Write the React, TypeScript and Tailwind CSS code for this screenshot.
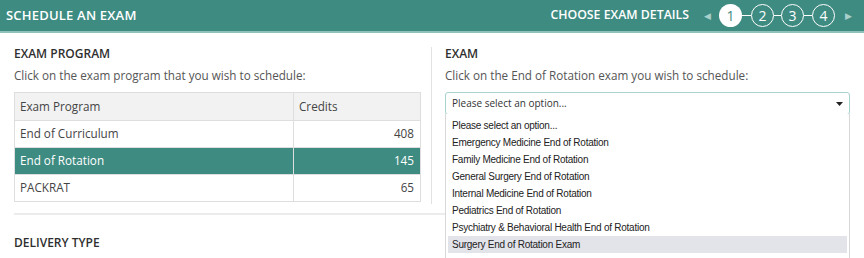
import React from "react";

const options = [
  "Please select an option...",
  "Emergency Medicine End of Rotation",
  "Family Medicine End of Rotation",
  "General Surgery End of Rotation",
  "Internal Medicine End of Rotation",
  "Pediatrics End of Rotation",
  "Psychiatry & Behavioral Health End of Rotation",
  "Surgery End of Rotation Exam",
];

const rows = [
  { name: "End of Curriculum", credits: "408", sel: false },
  { name: "End of Rotation", credits: "145", sel: true },
  { name: "PACKRAT", credits: "65", sel: false },
];

function Step({ n, active }: { n: number; active?: boolean }) {
  return (
    <div
      className={
        active
          ? "w-[23px] h-[23px] rounded-full bg-white text-[#3e8b82] flex items-center justify-center text-[14px]"
          : "w-[23px] h-[23px] rounded-full border-[1.5px] border-white text-white flex items-center justify-center text-[14px]"
      }
    >
      {n}
    </div>
  );
}

export default function App() {
  return (
    <div className="w-[864px] h-[258px] overflow-hidden bg-white relative font-['Open_Sans',sans-serif] text-[#444]">
      <div className="h-[33px] bg-[#3e8b82] border-b-[2px] border-[#8fc0ba] flex items-center pl-[6px] pr-[12px] text-white">
        <div className="text-[13px] font-semibold tracking-[0.2px]">SCHEDULE AN EXAM</div>
        <div className="ml-auto flex items-center">
          <div className="text-[12.3px] font-semibold mr-[15px]">CHOOSE EXAM DETAILS</div>
          <span className="text-[9px] text-[#a9cfca] mr-[8px]">◀</span>
          <Step n={1} active />
          <div className="w-[9px] h-[1.5px] bg-white" />
          <Step n={2} />
          <div className="w-[7px] h-[1.5px] bg-white" />
          <Step n={3} />
          <div className="w-[8px] h-[1.5px] bg-white" />
          <Step n={4} />
          <span className="text-[9px] text-[#a9cfca] ml-[10px]">▶</span>
        </div>
      </div>

      <div className="flex">
        <div className="w-[432px] pl-[14px] pr-[11px] mt-[14px] border-r border-[#e2e2e2] pb-[2px]">
          <div className="text-[12px] font-semibold text-[#2f2f2f] leading-[14px]">EXAM PROGRAM</div>
          <div className="text-[11.7px] text-[#555] mt-[6px] leading-[16px]">Click on the exam program that you wish to schedule:</div>
          <table className="mt-[9px] w-[407px] border-collapse text-[11.7px]">
            <thead>
              <tr className="bg-[#f2f2f2]">
                <td className="border border-[#dedede] pl-[5px] h-[28px] p-0">Exam Program</td>
                <td className="border border-[#dedede] pl-[5px] w-[127px] h-[28px] p-0">Credits</td>
              </tr>
            </thead>
            <tbody>
              {rows.map((r) => (
                <tr key={r.name} className={r.sel ? "bg-[#3e8b82] text-white" : ""}>
                  <td className="border border-[#dedede] pl-[5px] h-[27px]">{r.name}</td>
                  <td className="border border-[#dedede] pr-[6px] text-right h-[27px]">{r.credits}</td>
                </tr>
              ))}
            </tbody>
          </table>
        </div>
        <div className="flex-1 pl-[13px] pr-[14px] mt-[14px]">
          <div className="text-[12px] font-semibold text-[#2f2f2f] leading-[14px]">EXAM</div>
          <div className="text-[11.7px] text-[#555] mt-[6px] leading-[16px]">Click on the End of Rotation exam you wish to schedule:</div>
          <div className="mt-[9px] h-[23px] border border-[#a6d3cd] rounded-[3px] flex items-center pl-[6px] pr-[6px] text-[10px] text-[#333]">
            <span>Please select an option...</span>
            <svg className="ml-auto" width="7" height="4" viewBox="0 0 7 4"><path d="M0 0h7L3.5 4z" fill="#222" /></svg>
          </div>
        </div>
      </div>

      <div className="ml-[14px] mr-[14px] mt-[9px] border-t-[2px] border-[#ececec]" />
      <div className="pl-[14px] mt-[21px] text-[12px] font-semibold text-[#2f2f2f] leading-[14px]">DELIVERY TYPE</div>

      <div className="absolute left-[445px] top-[114px] w-[405px] h-[150px] bg-white border-x border-[#d8d8d8] pt-[3px] px-[2px] font-['Liberation_Sans',Arial,sans-serif] text-[10px] tracking-[-0.25px] text-[#222]">
        {options.map((o, i) => (
          <div
            key={o}
            className={i === options.length - 1 ? "h-[17px] leading-[17px] pl-[4px] bg-[#e3e3ea]" : "h-[17px] leading-[17px] pl-[4px]"}
          >
            {o}
          </div>
        ))}
      </div>
    </div>
  );
}
